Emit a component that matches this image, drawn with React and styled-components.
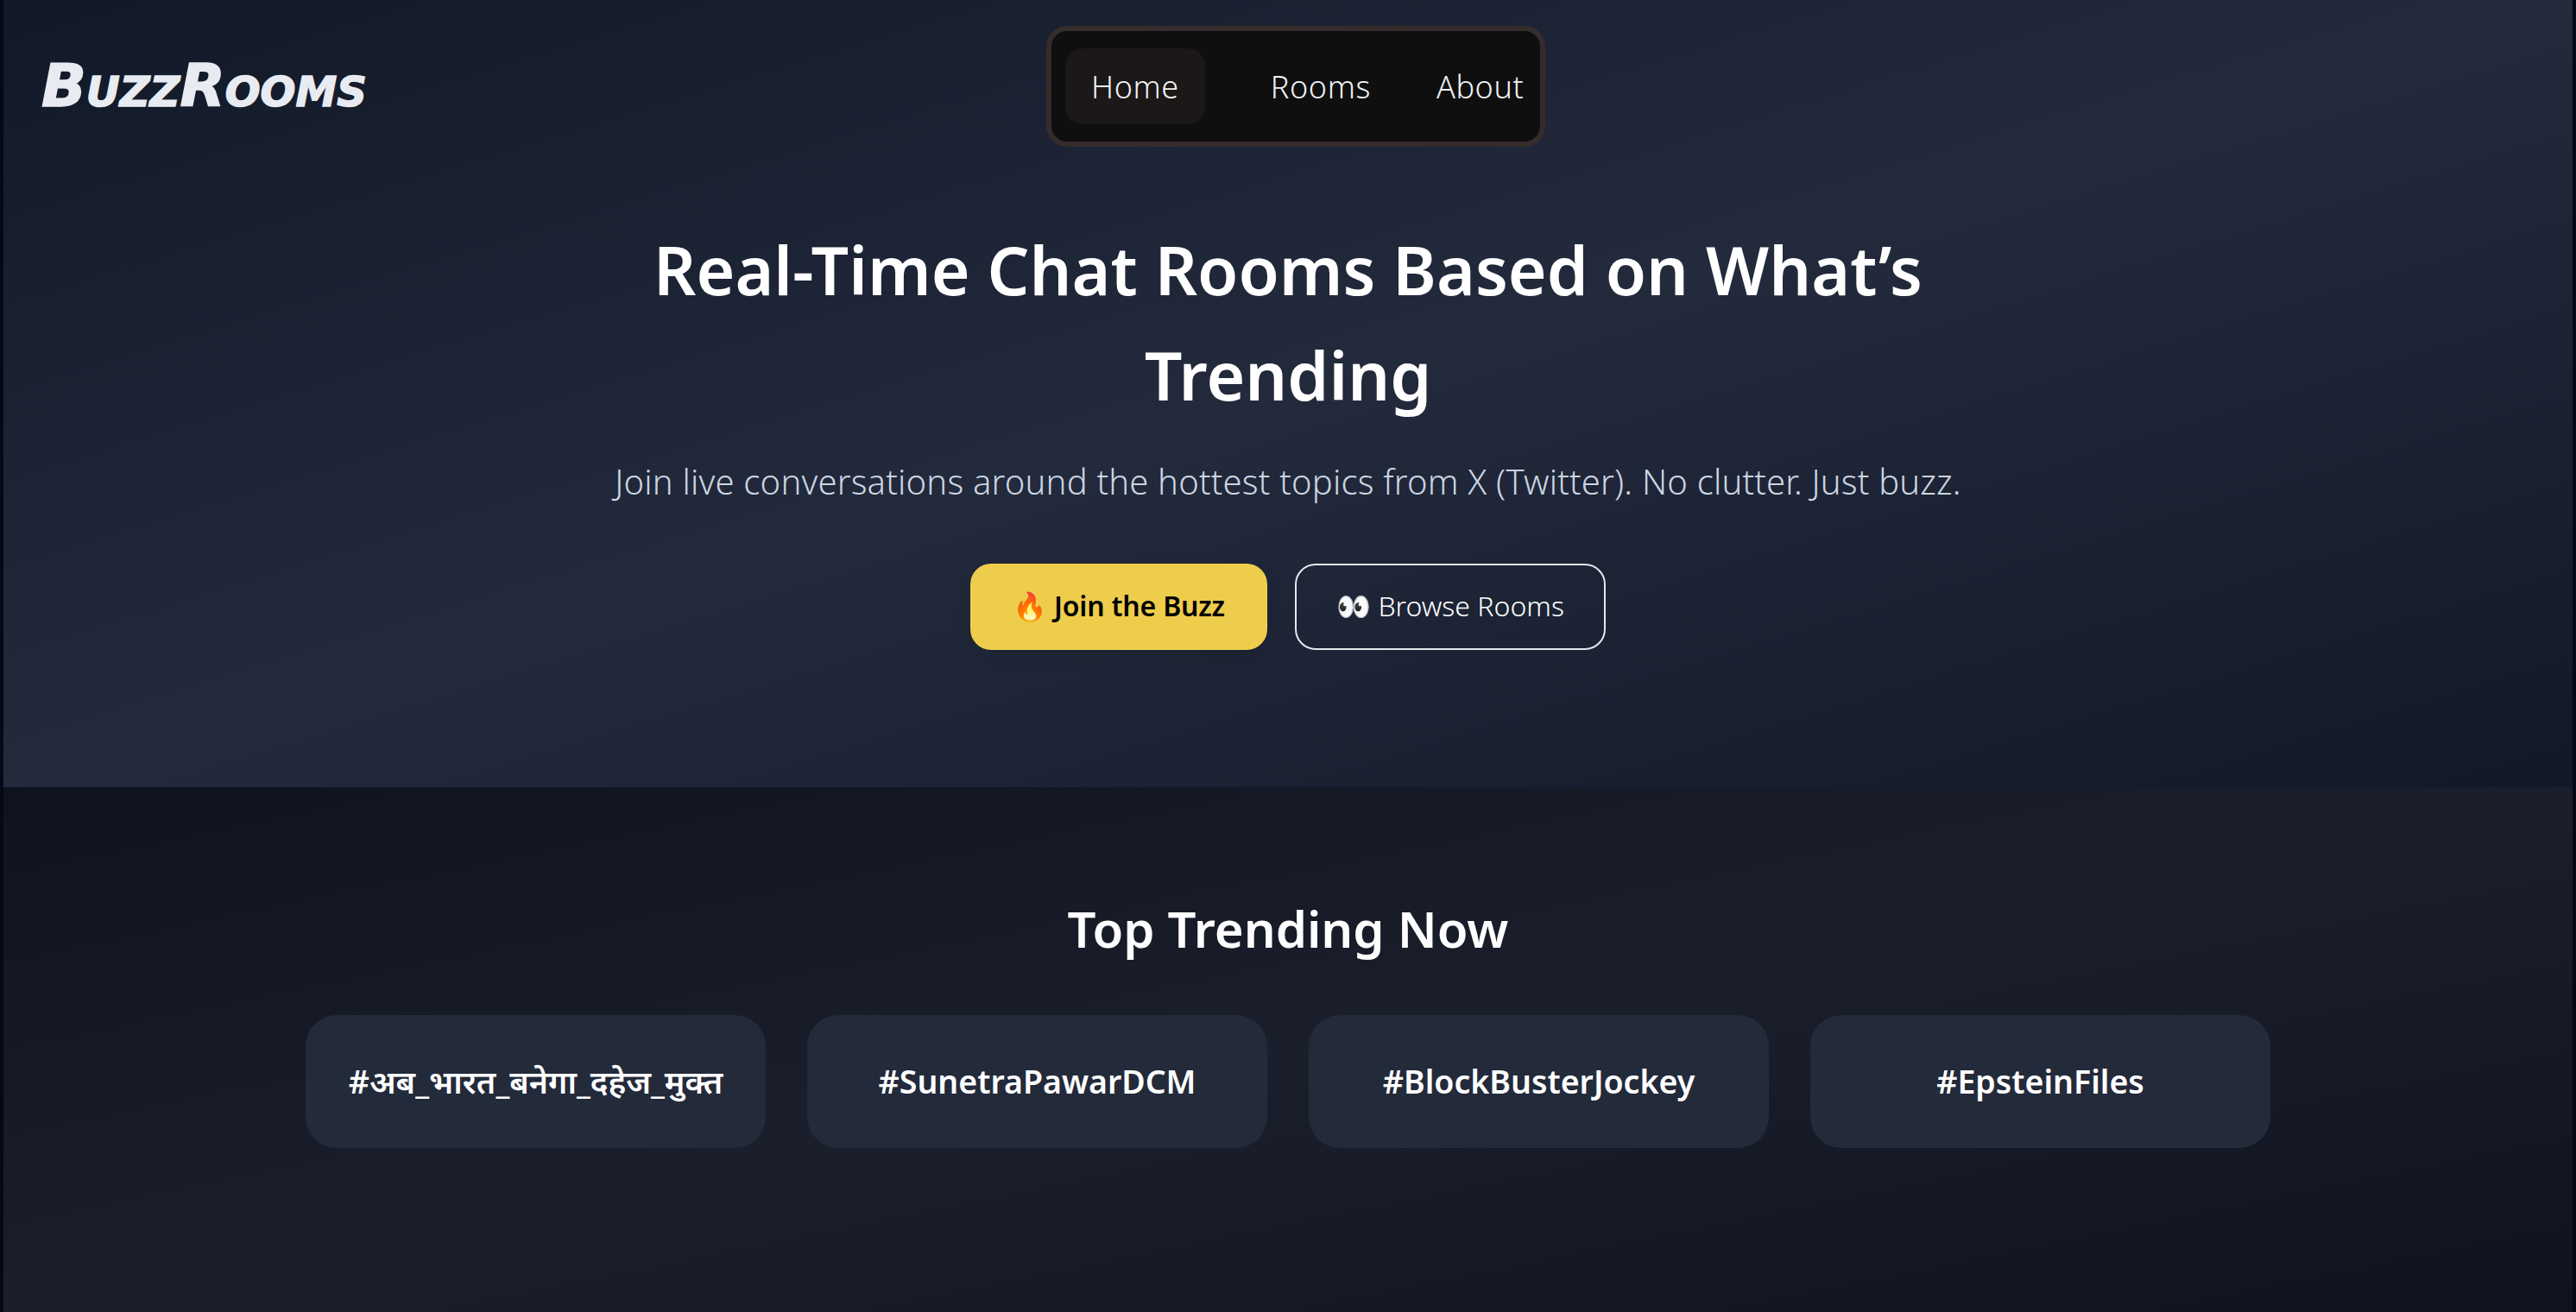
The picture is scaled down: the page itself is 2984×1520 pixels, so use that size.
import React from 'react'
import styled, {createGlobalStyle} from 'styled-components'

const Global = createGlobalStyle`
  html, body { margin: 0; padding: 0; background: #050916; }
  body {
    font-family: "Noto Sans", "Open Sans", "Liberation Sans", sans-serif;
    color: #e5e7eb;
    overflow: hidden;
  }
`

const Page = styled.div`
  width: 2984px;
  height: 1520px;
  box-sizing: border-box;
  padding: 0 4px;
  background: #050916;
  display: flex;
  flex-direction: column;
`

const Hero = styled.section`
  height: 912px;
  background: linear-gradient(to bottom right, #111827 0%, #232a3c 50%, #111827 100%);
  display: flex;
  flex-direction: column;
  align-items: center;
`

const Header = styled.header`
  width: 100%;
  box-sizing: border-box;
  padding: 30px 26px 0 44px;
  display: grid;
  grid-template-columns: 1fr auto 1fr;
  align-items: center;
`

const Logo = styled.div`
  font-family: "DejaVu Sans", sans-serif;
  font-weight: 700;
  font-style: italic;
  font-variant: small-caps;
  font-size: 68px;
  line-height: 1;
  letter-spacing: 0;
  color: #e8ebf1;
  -webkit-text-stroke: 1.5px #e8ebf1;
`

const Nav = styled.nav`
  box-sizing: border-box;
  width: 578px;
  height: 140px;
  padding: 20px 16px;
  border: 6px solid #352c2c;
  border-radius: 24px;
  background: #0f0f0f;
  display: flex;
  align-items: center;
`

const NavLink = styled.a`
  box-sizing: border-box;
  height: 88px;
  display: flex;
  align-items: center;
  padding: 0 30px;
  margin-right: ${({$gap}) => $gap}px;
  border-radius: 20px;
  font-size: 36px;
  font-weight: 300;
  letter-spacing: .6px;
  color: #f0f2f6;
  background: ${({$active}) => $active ? '#1b1817' : 'transparent'};
`

const HeroBody = styled.div`
  padding-top: 82px;
  display: flex;
  flex-direction: column;
  align-items: center;
`

const Title = styled.h1`
  width: 1600px;
  margin: 0;
  font-size: 76.8px;
  line-height: 122px;
  font-weight: 600;
  color: #fff;
  text-align: center;
`

const Sub = styled.p`
  margin: 30px 0 0;
  font-size: 40px;
  line-height: 64px;
  font-weight: 300;
  letter-spacing: .2px;
  color: #cbd5e1;
`

const Actions = styled.div`
  margin-top: 63px;
  display: flex;
  gap: 32px;
`

const Button = styled.a`
  box-sizing: border-box;
  width: ${({$w}) => $w}px;
  height: 100px;
  padding-bottom: 3px;
  display: flex;
  align-items: center;
  justify-content: center;
  border-radius: 24px;
  font-size: 32px;
  font-weight: ${({$primary}) => $primary ? 600 : 300};
  letter-spacing: ${({$primary}) => $primary ? '-.2px' : '0'};
  color: ${({$primary}) => $primary ? '#000' : '#fff'};
  background: ${({$primary}) => $primary ? '#eecd4c' : 'transparent'};
  border: ${({$primary}) => $primary ? 'none' : '2px solid #e5e7eb'};
  box-shadow: ${({$primary}) => $primary ? '0 8px 20px rgba(0,0,0,.08)' : 'none'};
`

const Trending = styled.section`
  flex: 1;
  background: linear-gradient(to bottom right, #0f131e 0%, #1b1f2c 50%, #0f131e 100%);
  display: flex;
  flex-direction: column;
  align-items: center;
`

const TrendTitle = styled.h2`
  margin: 128px 0 0;
  font-size: 58px;
  line-height: 72px;
  font-weight: 600;
  color: #fff;
`

const Cards = styled.div`
  width: 2276px;
  margin-top: 64px;
  display: grid;
  grid-template-columns: repeat(4, 1fr);
  gap: 48px;
`

const Card = styled.div`
  height: 154px;
  padding-bottom: 2px;
  box-sizing: border-box;
  border-radius: 36px;
  background: #232a3a;
  display: flex;
  align-items: center;
  justify-content: center;
  font-size: 37.5px;
  font-weight: 600;
  color: #fff;
`

const tags = ['#अब_भारत_बनेगा_दहेज_मुक्त', '#SunetraPawarDCM', '#BlockBusterJockey', '#EpsteinFiles']

export default function App() {
  return (
    <Page>
      <Global />
      <Hero>
        <Header>
          <Logo>BuzzRooms</Logo>
          <Nav>
            <NavLink $active $gap={46}>Home</NavLink>
            <NavLink $gap={16}>Rooms</NavLink>
            <NavLink $gap={0}>About</NavLink>
          </Nav>
          <div />
        </Header>
        <HeroBody>
          <Title>Real-Time Chat Rooms Based on What’s Trending</Title>
          <Sub>Join live conversations around the hottest topics from X (Twitter). No clutter. Just buzz.</Sub>
          <Actions>
            <Button $primary $w={344}>🔥 Join the Buzz</Button>
            <Button $w={360}>👀 Browse Rooms</Button>
          </Actions>
        </HeroBody>
      </Hero>
      <Trending>
        <TrendTitle>Top Trending Now</TrendTitle>
        <Cards>
          {tags.map(t => <Card key={t}>{t}</Card>)}
        </Cards>
      </Trending>
    </Page>
  )
}
